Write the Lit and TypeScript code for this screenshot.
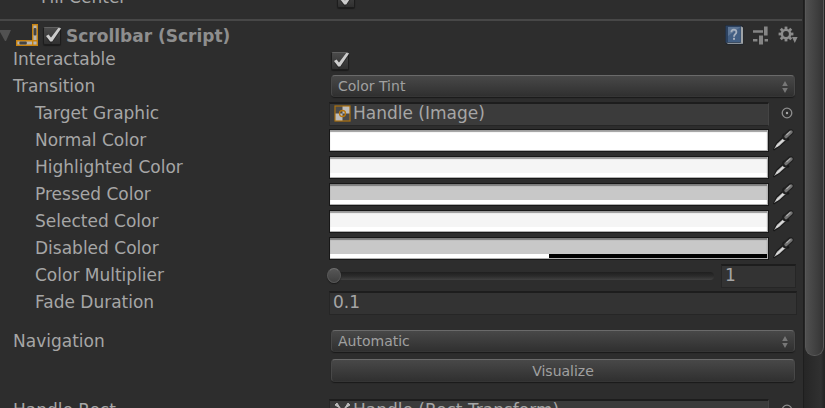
import { LitElement, html, css, svg, nothing } from "lit";
import { customElement } from "lit/decorators.js";
import { styleMap } from "lit/directives/style-map.js";

interface ColorRow {
  id: string;
  label: string;
  value: string;
  alpha: number;
}

const COLORS: ColorRow[] = [
  { id: "normal", label: "Normal Color", value: "#ffffff", alpha: 100 },
  { id: "highlighted", label: "Highlighted Color", value: "#f5f5f5", alpha: 100 },
  { id: "pressed", label: "Pressed Color", value: "#c8c8c8", alpha: 100 },
  { id: "selected", label: "Selected Color", value: "#f5f5f5", alpha: 100 },
  { id: "disabled", label: "Disabled Color", value: "#c8c8c8", alpha: 50 },
];

const checkMark = html`<svg class="mark" width="20" height="20" viewBox="0 0 20 20" aria-hidden="true">
  <path d="M5 12 L8 16 L16 5" fill="none" stroke="#1c1c1c" stroke-width="4" opacity=".5" />
  <path d="M3 11 L5.6 9.4 L8 12.6 L15.2 3 L18.2 3.2 L9.2 16.4 L7.2 16.4 Z" fill="#cccccc" />
</svg>`;

const dropper = html`<svg width="22" height="22" viewBox="0 0 22 22" aria-hidden="true">
  <path d="M0 20.6 L3 14 L11 6.6 L15 10.4 L7 17.6 L1 21.4 Z" fill="#181818" />
  <path d="M1 20 L4 14.8 L11.4 8 L13.6 10.2 L6.4 16.8 Z" fill="#b4b4b4" />
  <path d="M3.4 17.4 L12 9.4" stroke="#dedede" stroke-width="1.4" />
  <path d="M10 5.4 L15.8 11.2" stroke="#161616" stroke-width="2.4" />
  <path d="M12 8 L17.6 3" stroke="#202020" stroke-width="6" stroke-linecap="round" />
  <path d="M13 7.6 L18 3" stroke="#717171" stroke-width="3.4" stroke-linecap="round" />
  <path d="M13.4 6 L17.4 2.4" stroke="#aaa" stroke-width="1.2" />
</svg>`;

const target = html`<svg width="12" height="12" viewBox="0 0 12 12" aria-hidden="true">
  <circle cx="6" cy="6" r="4.8" fill="none" stroke="#8e8e8e" stroke-width="1.3" />
  <circle cx="6" cy="6" r="1.2" fill="#a8a8a8" />
</svg>`;

const arrows = html`<svg class="arrows" width="8" height="12" viewBox="0 0 8 12" aria-hidden="true">
  <path d="M4 0 L6.8 5 H1.2 Z M4 12 L6.8 7 H1.2 Z" fill="#777" />
</svg>`;

@customElement("app-root")
export class AppRoot extends LitElement {
  static styles = css`
    :host {
      display: flex;
      height: 100vh;
      overflow: hidden;
      background: #2d2d2d;
      color: #a6a6a6;
      font: 17px/20px "DejaVu Sans", Verdana, sans-serif;
    }
    * {
      box-sizing: border-box;
    }
    input,
    select,
    button {
      appearance: none;
      margin: 0;
      padding: 0;
      border: 0;
      border-radius: 0;
      background: none;
      font: inherit;
      color: inherit;
      outline: none;
    }
    svg {
      display: block;
      flex: none;
    }
    .content {
      flex: 1;
      min-width: 0;
      margin-top: -16px;
    }
    .row {
      display: flex;
      align-items: center;
      height: 27px;
      padding-right: 6px;
    }
    .row > label {
      flex: none;
      width: 329px;
      padding: 0 0 2px 13px;
      white-space: nowrap;
    }
    .row.sub > label {
      padding-left: 35px;
    }
    .row.nested {
      padding-left: 6px;
    }
    .gap {
      margin-top: 12px;
    }
    .header {
      display: flex;
      align-items: center;
      height: 27px;
      margin: 8px 1px 0 0;
      padding: 2px 3px 0 0;
      border-top: 2px solid #474747;
    }
    .fold {
      width: 12px;
      margin-right: 4px;
    }
    .header .check {
      margin-left: 5px;
    }
    .title {
      flex: 1;
      margin: 0 0 0 3px;
      padding-top: 2px;
      font-size: 17px;
      font-weight: bold;
      color: #8e8e8e;
    }
    .tools {
      display: flex;
      gap: 8px;
      align-items: center;
    }
    .tools button:first-child {
      opacity: 0.85;
    }
    .check {
      display: grid;
      flex: none;
      width: 20px;
      height: 20px;
    }
    .check > * {
      grid-area: 1 / 1;
    }
    .box {
      place-self: end start;
      width: 18px;
      height: 18px;
      border: 1px solid #1d1d1d;
      border-top-color: #606060;
      border-radius: 2px;
      background: linear-gradient(#4a4a4a, #303030);
      box-shadow: 0 1px 1px #1b1b1b;
    }
    .mark {
      pointer-events: none;
    }
    .toggle {
      margin-left: 2px;
    }
    .popup {
      position: relative;
      flex: 1;
      display: flex;
      margin: 0 2px 2px;
    }
    .popup select,
    .push {
      flex: 1;
      height: 22px;
      border: 1px solid #484848;
      border-top-color: #6a6a6a;
      border-bottom-color: #353535;
      border-radius: 4px;
      background: linear-gradient(#484848, #303030);
      box-shadow: 0 1px 1px #1a1a1a;
      font-size: 14px;
      line-height: 16px;
      color: #a0a0a0;
    }
    .popup select {
      padding: 0 20px 0 6px;
    }
    .arrows {
      position: absolute;
      right: 6px;
      top: 6px;
      pointer-events: none;
    }
    .action {
      display: flex;
      align-items: center;
      height: 30px;
      padding: 1px 8px 0 331px;
    }
    .action .push {
      height: 23px;
    }
    .field {
      flex: 1;
      min-width: 0;
      height: 24px;
      padding: 0 4px 2px;
      border: 1px solid #262626;
      border-top: 2px solid #1d1d1d;
      background: #333;
    }
    .object {
      display: flex;
      align-items: center;
      gap: 2px;
      border-right-color: #444;
      background: #3b3b3b;
      text-align: left;
      white-space: nowrap;
    }
    .pick {
      display: flex;
      justify-content: center;
      width: 28px;
      padding: 0 0 2px 8px;
    }
    .swatch {
      flex: 1;
      position: relative;
      display: flex;
      flex-direction: column;
      height: 23px;
      border: 1px solid #171717;
      background: #fff;
    }
    .swatch::after {
      content: "";
      position: absolute;
      inset: 0;
      border-bottom: 1px solid #b0b0b0;
      border-right: 1px solid #b0b0b0;
      box-shadow: inset 0 2px 1px rgb(0 0 0 / 38%);
      pointer-events: none;
    }
    .swatch input {
      flex: 1;
      width: 100%;
      min-height: 0;
    }
    .swatch input::-webkit-color-swatch-wrapper {
      padding: 0;
    }
    .swatch input::-webkit-color-swatch {
      border: 0;
      border-radius: 0;
    }
    .alpha {
      flex: none;
      height: 5px;
      background: #000;
    }
    .level {
      height: 100%;
      background: #fff;
    }
    .dropper {
      width: 28px;
      padding: 0 0 2px 4px;
    }
    .row.slide > label {
      width: 327px;
    }
    .range {
      flex: 1;
      min-width: 0;
      height: 16px;
    }
    .range::-webkit-slider-runnable-track {
      height: 8px;
      border-radius: 4px;
      background: linear-gradient(#1f1f1f, #2b2b2b 50%, #414141);
    }
    .range::-webkit-slider-thumb {
      appearance: none;
      width: 14px;
      height: 15px;
      margin-top: -4px;
      border: 1px solid #585858;
      border-top-color: #707070;
      border-radius: 50%;
      background: linear-gradient(#565656, #404040);
      box-shadow: 0 1px 1px #1a1a1a;
    }
    .number {
      flex: none;
      width: 75px;
      margin: 0 1px 0 7px;
      padding-left: 3px;
    }
    .row > .wide {
      padding-left: 3px;
    }
    .bar {
      flex: none;
      width: 22px;
      padding: 0 2px 0 1px;
      border-left: 1px solid #1e1e1e;
      background: linear-gradient(90deg, #262626, #303030 80%, #222);
    }
    .thumb {
      width: 19px;
      height: 356px;
      border: 1px solid #585858;
      border-width: 0 1px 1px;
      border-radius: 0 0 9px 9px;
      background: linear-gradient(90deg, #505050, #353535);
    }
  `;

  private check(id: string, label: string | typeof nothing = nothing) {
    return html`<span class="check"><input class="box" id=${id} type="checkbox" checked aria-label=${label} />${checkMark}</span>`;
  }

  private colorRow(row: ColorRow) {
    return html`<div class="row sub">
      <label for=${row.id}>${row.label}</label>
      <div class="swatch">
        <input id=${row.id} type="color" .value=${row.value} />
        <div class="alpha"><div class="level" style=${styleMap({ width: `${row.alpha}%` })}></div></div>
      </div>
      <button class="dropper" aria-label=${`Pick ${row.label}`}>${dropper}</button>
    </div>`;
  }

  private popup(id: string, value: string) {
    return html`<div class="popup"><select id=${id}><option>${value}</option></select>${arrows}</div>`;
  }

  private gear() {
    const teeth = [0, 45, 90, 135, 180, 225, 270, 315];
    return svg`${teeth.map((a) => svg`<rect x="6.6" y="0.6" width="2.8" height="3.4" fill="#8c8c8c" transform=${`rotate(${a} 8 8)`} />`)}`;
  }

  render() {
    return html`
      <main class="content">
        <div class="row sub nested">
          <label for="fill">Fill Center</label>
          <div class="toggle">${this.check("fill")}</div>
        </div>

        <header class="header">
          <button class="fold" aria-label="Collapse">
            <svg width="12" height="12" viewBox="0 0 12 12"><path d="M0 1 H11 L6 12 H5 L0 3 Z" fill="#515151" /></svg>
          </button>
          <svg width="22" height="22" viewBox="0 0 22 22" aria-hidden="true">
            <path d="M0 16 H16 V0 H22 V22 H0 Z" fill="#c8830f" />
            <path d="M17.4 1.4 h3.2 v14.6 h-3.2z M1.4 17.4 h14.6 v3.2 h-14.6z M17.4 17.4 h3.2 v3.2 h-3.2z" fill="#b5b5b5" />
            <rect x="17.6" y="4" width="2.8" height="7.4" rx="1" fill="#444" />
            <rect x="3.4" y="17.6" width="7.4" height="2.8" rx="1" fill="#444" />
          </svg>
          ${this.check("enabled", "Enabled")}
          <h2 class="title">Scrollbar (Script)</h2>
          <div class="tools">
            <button aria-label="Help">
              <svg width="20" height="22" viewBox="0 0 20 22">
                <path d="M1 1 H18 L19.4 3 V21 H3 L1 18.6 Z" fill="#20262f" />
                <path d="M16.6 2 L19 3.4 V20 L16.6 18.4 Z" fill="#b4b8bc" />
                <path d="M2 18.4 H17 L19 20 H4 Z" fill="#9da4ac" />
                <rect x="1.6" y="1.6" width="15" height="17" fill="#2c4669" />
                <path d="M4 3 H16.6 V18 H4 Z" fill="#486893" />
                <path d="M4 3 H16.6 L4 12 Z" fill="#6682a6" />
                <path d="M7.4 8.2 C7.4 4.8 12.4 4.8 12.4 8 C12.4 10.4 10 10 10 12.8" fill="none" stroke="#bcc8d8" stroke-width="1.8" />
                <rect x="9" y="13.8" width="2" height="2" fill="#bcc8d8" />
              </svg>
            </button>
            <button aria-label="Presets">
              <svg width="17" height="20" viewBox="0 0 17 20">
                <path d="M1 6.5 H11 M1 15.2 H5.4 M12.6 15.2 H16" stroke="#858585" stroke-width="2.6" />
                <path d="M12 1.4 h3.6 v9 h-3.6z M7 10.6 h4 v9 h-4z" fill="#858585" />
              </svg>
            </button>
            <button aria-label="Options">
              <svg width="22" height="20" viewBox="0 0 22 20">
                <g transform="translate(1 1)">
                  ${this.gear()}
                  <circle cx="8" cy="8" r="4.1" fill="none" stroke="#8c8c8c" stroke-width="2.4" />
                </g>
                <path d="M15 12 H20.6 L17.8 18 Z" fill="#8c8c8c" />
              </svg>
            </button>
          </div>
        </header>

        <div class="row">
          <label for="interactable">Interactable</label>
          <div class="toggle">${this.check("interactable")}</div>
        </div>
        <div class="row">
          <label for="transition">Transition</label>
          ${this.popup("transition", "Color Tint")}
        </div>
        <div class="row sub">
          <label for="graphic">Target Graphic</label>
          <button class="field object" id="graphic">
            <svg width="17" height="17" viewBox="0 0 17 17" aria-hidden="true">
              <rect x="1" y="1" width="15" height="15" fill="#4a4a4a" />
              <path d="M8.5 1 H16 V8.5 H8.5 Z M1 8.5 H8.5 V16 H1 Z" fill="#bcbcbc" />
              <rect x="1" y="1" width="15" height="15" fill="none" stroke="#ad720f" stroke-width="1.2" />
              <circle cx="8.5" cy="8.5" r="3" fill="none" stroke="#b9770c" stroke-width="1.3" />
            </svg>
            Handle (Image)
          </button>
          <button class="pick" aria-label="Select graphic">${target}</button>
        </div>
        ${COLORS.map((row) => this.colorRow(row))}
        <div class="row sub slide">
          <label for="multiplier">Color Multiplier</label>
          <input class="range" id="multiplier" type="range" min="1" max="5" value="1" />
          <input class="field number" type="text" value="1" aria-label="Color Multiplier value" />
        </div>
        <div class="row sub">
          <label for="fade">Fade Duration</label>
          <input class="field wide" id="fade" type="text" value="0.1" />
        </div>
        <div class="row gap">
          <label for="navigation">Navigation</label>
          ${this.popup("navigation", "Automatic")}
        </div>
        <div class="action"><button class="push">Visualize</button></div>
        <div class="row gap">
          <label for="rect">Handle Rect</label>
          <button class="field object" id="rect">
            <svg width="17" height="17" viewBox="0 0 17 17" aria-hidden="true">
              <path d="M4 4 L13 13 M13 4 L4 13" stroke="#777" stroke-width="1.4" />
              <path d="M1 3 L3 1 L6 6 Z M16 3 L14 1 L11 6 Z M1 14 L3 16 L6 11 Z M16 14 L14 16 L11 11 Z" fill="#bbb" stroke="#bbb" />
            </svg>
            Handle (Rect Transform)
          </button>
          <button class="pick" aria-label="Select rect">${target}</button>
        </div>
      </main>
      <aside class="bar"><div class="thumb"></div></aside>
    `;
  }
}
